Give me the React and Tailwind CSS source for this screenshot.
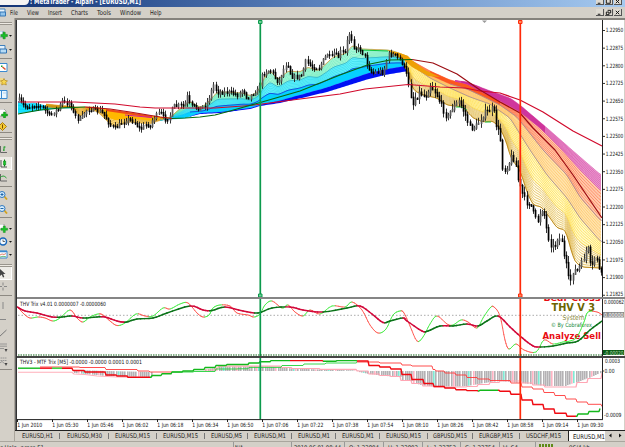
import React from "react";

const SANS = "font-['DejaVu_Sans_Condensed','DejaVu_Sans',sans-serif]";

// ---------- numeric helpers ----------
const parse = (s) => s.trim().split(/\s+/).map((p) => p.split(",").map(Number));
const at = (pts, x) => {
  if (x <= pts[0][0]) return pts[0][1];
  for (let i = 1; i < pts.length; i++) {
    if (x <= pts[i][0]) {
      const [x0, y0] = pts[i - 1];
      const [x1, y1] = pts[i];
      return x1 === x0 ? y1 : y0 + ((y1 - y0) * (x - x0)) / (x1 - x0);
    }
  }
  return pts[pts.length - 1][1];
};
let seed = 7;
const rnd = () => {
  seed = (seed * 16807) % 2147483647;
  return seed / 2147483647;
};
const smoothAt = (pts, x) => (at(pts, x - 2.5) + 2 * at(pts, x) + at(pts, x + 2.5)) / 4;
const curve = (a, b, t, x0, x1) => {
  let d = "";
  for (let x = x0; x <= x1; x += 2) {
    const y = smoothAt(a, x) * (1 - t) + smoothAt(b, x) * t;
    d += (d ? "L" : "M") + x + " " + y.toFixed(1);
  }
  return d;
};
const area = (a, b, x0, x1) => {
  const top = [];
  const bot = [];
  for (let x = x0; x <= x1; x += 2) {
    top.push(x + " " + smoothAt(a, x).toFixed(1));
    bot.unshift(x + " " + smoothAt(b, x).toFixed(1));
  }
  return "M" + top.concat(bot).join("L") + "Z";
};
const mix = (a, b, t) => {
  const xs = [...new Set([...a, ...b].map((p) => p[0]))].sort((p, q) => p - q);
  return xs.map((x) => [x, at(a, x) * (1 - t) + at(b, x) * t]);
};

function Band({ a, b, x0, x1, n = 0, line, fill, fo = 1, w = 0.6 }) {
  return (
    <g fill="none">
      <path d={area(a, b, x0, x1)} fill={fill} fillOpacity={fo} />
      {Array.from({ length: n }, (_, i) => (
        <path key={i} d={curve(a, b, n > 1 ? i / (n - 1) : 0, x0, x1)} stroke={line} strokeWidth={w} />
      ))}
    </g>
  );
}
const Line = ({ p, c, w = 1 }) => <polyline points={p} fill="none" stroke={c} strokeWidth={w} strokeLinejoin="round" />;
const T = ({ x, y, s, len, c = "#111", b, children }) => (
  <text x={x} y={y} fontSize={s} textLength={len} lengthAdjust="spacingAndGlyphs" fill={c} fontWeight={b ? 700 : 400}>
    {children}
  </text>
);

// ---------- price ----------
const price = parse(
  "18,99 20,101 24,106 28,107 35,105 42,107 47,112 50,116 53,112 58,109 62,101 66,103 70,102 73,112 78,119 81,119 85,111 90,109 100,111 105,116 110,125 115,128 120,124 127,119 133,121 140,129 146,124 150,126 153,118 160,112 165,119 169,117 173,106 180,105 184,106 187,96 190,105 195,107 200,108 206,104 210,95 213,84 217,92 230,92 238,95 243,89 247,98 252,94 258,90 262,74 265,72 271,70 276,80 279,81 283,70 287,62 291,76 298,77 302,74 305,61 308,63 312,67 318,68 323,60 328,53 330,58 334,53 338,57 341,50 344,54 346,50 348,32 351,37 354,48 360,49 365,57 367,65 372,73 380,71 383,73 388,54 395,55 401,61 405,70 409,85 412,105 415,98 420,92 425,97 430,85 436,93 442,107 447,118 451,109 459,101 465,114 470,128 476,126 484,113 493,108 496,125 500,135 501,150 503,172 508,165 512,155 515,162 518,180 521,190 526,202 530,203 534,215 537,222 540,212 543,208 547,232 550,243 554,248 557,238 562,240 564,258 567,268 569,284 573,270 577,270 582,262 587,247 589,251 591,275 593,260 596,255 599,270 601,274"
);
const candles = (() => {
  const out = [];
  let prev = price[0][1];
  for (let x = 18.5; x < 602; x += 2.19) {
    const k = x > 405 ? 1.5 : 1;
    const m = at(price, x) + (rnd() - 0.5) * 3.5 * k;
    const hi = Math.min(prev, m) - 0.5 - rnd() * 4 * k;
    const lo = Math.max(prev, m) + 0.5 + rnd() * 4 * k;
    out.push({ x: Math.round(x), o: Math.min(prev, m) - 0.3, c: Math.max(prev, m) + 1.2, hi, lo, up: m < prev - 1 });
    prev = m;
  }
  return out;
})();

// ---------- moving-average ribbons ----------
const lA = parse("18,101 25,104 34,103 46,106 60,107 74,107");
const lB = parse("18,113 35,111 50,109 62,108 74,108");
const oA = parse("46,104 74,107 95,107 110,110 130,113 150,116 170,118");
const oB = parse("46,107 60,108 70,106 75,110 80,118 85,112 90,109 98,112 104,118 110,124 116,127 122,124 130,122 140,123 150,124 158,121 170,118");
const gA = parse("160,120 170,118 176,112 184,106 190,101 195,105 200,107 203,107 212,98 217,92 223,92 243,93 250,96 258,92 263,80 270,70 278,80 288,71 300,72 308,67 318,71 327,63 333,57 347,53 352,45 360,49 387,50 393,51 409,57");
const gE = parse("160,120 172,119 185,118 200,113 220,112 250,108 260,105 280,100.5 327,87.5 367,73.5 387,69 409,65.5");
const gF = parse("160,120 172,119 185,118 200,114 220,113 250,109 260,106 280,103 327,92 367,79.5 387,74.5 409,71");
const g1 = mix(gA, gE, 0.36);
const g2 = mix(gA, gE, 0.7);

const L0 = parse("405,66 409,75 413,90 423,95 437,98 447,105 463,107 473,118 483,122 493,121 500,128 507,143 510,157 520,170 527,192 533,205 542,207 548,215 557,228 566,230 570,247 575,262 582,267 601,268");
const L1 = parse("405,60 410,64 430,78 450,88 470,97 490,104 510,118 530,150 547,175 567,198 580,218 601,242");
const L2 = parse("405,58 410,62 430,75 450,84 467,89 480,95 500,105 517,117 543,150 567,175 580,197 601,221");
const M = parse("405,57 430,71 450,80 467,84 480,91 500,101 520,112 540,128 562,150 580,170 601,191");
const L4 = parse("405,56 430,71 450,80 467,82 480,87 493,92 510,98 520,105 547,128 572,150 587,163 601,175");
const L05 = mix(L1, L0, 0.5);

const crimson = "18,102 75,102 115,104 140,107 155,108 215,108 250,105.5 262,104 300,99 340,94 365,89 408,84.5 440,87 465,88 480,91 500,93 520,100 543,112 573,131 602,146";
const signal = [
  ["#066a0b", "18,114 40,110 60,108 85,107"],
  ["#b00c14", "85,107 110,109 130,112 160,117 172,118.5"],
  ["#066a0b", "172,118.5 185,118 200,117 215,115 230,111 262,102 300,91 340,75 370,64 390,60 412,59.5"],
  ["#9b0c12", "412,59.5 433,63 457,74 480,90 500,102 520,113 533,128 555,150 573,175 602,218"],
];

const priceLabels = ["1.22950", "1.22875", "1.22800", "1.22725", "1.22650", "1.22575", "1.22500", "1.22425", "1.22350", "1.22275", "1.22200", "1.22125", "1.22050", "1.21975", "1.21900", "1.21825"];

function PricePane() {
  return (
    <svg className="block h-[277px] w-[608px] shrink-0" viewBox="17 20 608 277">
      <Band a={lA} b={lB} x0={18} x1={74} n={4} line="#00c4ee" fill="#12e3ff" />
      <Band a={oA} b={oB} x0={46} x1={170} n={10} line="#d08a00" fill="#ffcb30" fo={0.5} w={0.5} />
      <Band a={oA} b={mix(oA, oB, 0.6)} x0={104} x1={160} fill="#ffb800" />
      <Line p="106,110 130,113.5 152,117" c="#f04b16" w={2.2} />
      <Line p="125,115 152,117.5" c="#d31f9a" w={1} />
      <Band a={gA} b={g1} x0={160} x1={409} n={8} line="#4fe3ae" fill="#bdfbe0" w={0.5} />
      <Band a={g1} b={g2} x0={160} x1={409} n={7} line="#1fcfe2" fill="#6df5ff" w={0.5} />
      <Band a={g2} b={gE} x0={160} x1={409} n={2} line="#00b4ff" fill="#06d0ff" />
      <Band a={gE} b={gF} x0={190} x1={407} fill="#0010f4" />
      <path d={curve(gA, gA, 0, 160, 409)} fill="none" stroke="#e49a3d" strokeWidth="0.8" />
      <path d={curve(g1, g1, 0, 200, 405)} fill="none" stroke="#2b9bb0" strokeWidth="0.5" />
      <path d={curve(g2, g2, 0, 190, 405)} fill="none" stroke="#1439d3" strokeWidth="0.8" />
      <Line p="360,50 375,50.5 388,51" c="#10c743" w={1.2} />

      <Band a={L05} b={L0} x0={405} x1={602} n={10} line="#d9aa30" fill="#fff8cf" fo={0.4} w={0.6} />
      <Band a={L1} b={L05} x0={405} x1={602} n={9} line="#ffd83a" fill="#fff6a8" fo={0.6} w={0.65} />
      <Band a={L2} b={L1} x0={405} x1={602} n={8} line="#ffb347" fill="#ffdb92" fo={0.75} w={0.5} />
      <Band a={M} b={L2} x0={409} x1={602} n={10} line="#ff7347" fill="#ffbd98" fo={0.8} w={0.65} />
      <Band a={M} b={L2} x0={430} x1={500} fill="#fb4a0c" fo={0.75} />
      <Band a={L4} b={M} x0={455} x1={602} n={9} line="#d23f9e" fill="#ea9bd0" w={0.5} />
      <Band a={L4} b={M} x0={461} x1={545} fill="#c4108a" fo={0.6} />
      <path d={curve(L1, L1, 0, 408, 602)} fill="none" stroke="#a08b98" strokeWidth="0.8" />
      <path d={curve(L2, L2, 0, 450, 602)} fill="none" stroke="#a08b98" strokeWidth="0.8" />
      <path d={curve(L0, L0, 0, 409, 602)} fill="none" stroke="#b98516" strokeWidth="0.9" />
      <path d="M387 50L400 53L408 56L413 61L425 70L440 77L428 76L412 67L404 60L393 54Z" fill="#eea006" />
      <Line p="456,107 462,107 467,110" c="#1ac24b" w={1} />
      <Line p="485,122 491,122" c="#1ac24b" w={1} />

      {candles.map((k, i) => (
        <g key={i}>
          <line x1={k.x + 0.5} x2={k.x + 0.5} y1={k.hi} y2={k.lo} stroke="#1c1c1c" strokeWidth="0.9" />
          <rect x={k.x - 0.3} y={k.o} width="1.7" height={k.c - k.o} fill={k.up ? "#5a5a5a" : "#000"} />
        </g>
      ))}
      <Line p={crimson} c="#d10a2c" w={1.2} />
      {signal.map(([c, p]) => (
        <Line key={p} p={p} c={c} w={1.2} />
      ))}
      <path d="M482 20.5h5l-2.5 2.5z" fill="#999" />
      <path d="M260.3 20V297" stroke="#0c9a4c" strokeWidth="1.7" />
      <path d="M258.5 20.5h3.5v3h-3.5zM258.500 294h3.5v3h-3.5z" fill="#6fcf97" stroke="#0c9a4c" />
      <path d="M520.3 20V297" stroke="#ff2a0a" strokeWidth="1.7" />
      <path d="M518.5 20.5h3.5v3h-3.5zM518.500 294h3.5v3h-3.5z" fill="#ff8a5c" stroke="#ff2a0a" />
      <rect x="603" y="20" width="21" height="277" fill="#fff" />
      <path d="M602.5 20V297" stroke="#222" />
      {priceLabels.map((l, i) => (
        <g key={l}>
          <path d={`M603 ${30.5 + i * 17.65}h2`} stroke="#333" />
          <T x={605.7} y={(i === 15 ? 31.5 : 32.3) + i * 17.65} s={5.8} len={17.6}>
            {l}
          </T>
        </g>
      ))}
      <rect x="624" y="20" width="1" height="277" fill="#d4d0c8" />
    </svg>
  );
}

// Splits a line into rising (green) and falling (red) segments.
function Slope({ pts, up, down, w }) {
  return pts.slice(1).map(([x, y], i) => {
    const [px, py] = pts[i];
    return <line key={i} x1={px} y1={py} x2={x} y2={y} stroke={y > py ? down : up} strokeWidth={w} strokeLinecap="round" />;
  });
}

// Catmull-Rom resampling that rounds the oscillator corners.
const soften = (p) => {
  const out = [p[0]];
  for (let i = 0; i < p.length - 1; i++) {
    const a = p[Math.max(0, i - 1)];
    const b = p[i];
    const c = p[i + 1];
    const d = p[Math.min(p.length - 1, i + 2)];
    for (let s = 1; s <= 4; s++) {
      const t = s / 4;
      const f = (k) =>
        0.5 * (2 * b[k] + (c[k] - a[k]) * t + (2 * a[k] - 5 * b[k] + 4 * c[k] - d[k]) * t * t + (3 * b[k] - a[k] - 3 * c[k] + d[k]) * t * t * t);
      out.push([f(0), f(1)]);
    }
  }
  return out;
};

const trixSlow = soften(parse("17.5,307 25,311 37,313 52,317 62,317 72,316 83,318 97,317 105,317 117,321 123,322 127,322 137,319 153,318 167,313 190,306 203,310 212,310.5 225,307 243,311 258,313 272,308 290,307 303,310 323,312 347,308 360,306 372,314 383,322.5 390,321 403,318 407,321 422,331 428,331 440,326 453,326 467,324 478,326 487,321 498,316 510,327 520,336 530,344 537,347 553,346 567,343 578,341 590,330 602,321"));
const trixFast = soften(parse("17.5,307 24,314 30,318 38,317 45,318 53,321 60,318 70,310 77,318 83,322 90,317 98,314 103,315 110,321 117,325.5 125,323 136,314 145,316 153,316 163,308 170,309 180,304 188,303 197,313 203,317 209,315 213,308 220,305 230,306 237,313 248,315 254,317 260,314 265,305 272,301 282,308 288,305 295,312 303,316 310,310 320,314 332,306 345,307 352,302 362,310 370,325 378,333 386,329 393,315 400,311 404,313 410,326 417,341 423,337 430,324 437,316 447,324 453,325 461,320 468,322 477,328 483,318 490,308 494,307 500,316 505,340 509,349 516,344 524,350 536,352 544,340 553,344 563,342 570,341 577,337 584,322 588,312 597,312 602,315"));

function TrixPane() {
  return (
    <svg className="block h-[57px] w-[608px] shrink-0" viewBox="17 299 608 57">
      <path d="M18 315.3H602" stroke="#aaa" strokeDasharray="1.5 2" />
      <T x={543.5} y={300.9} s={9.5} len={57} c="#e80c12" b>Bear Cross</T>
      <T x={551.5} y={311} s={10.8} len={43.5} c="#6b6400" b>THV V 3</T>
      <T x={562.5} y={319.8} s={7} len={22} c="#8b8b3c">System</T>
      <T x={551} y={326.6} s={5.8} len={41} c="#16893a">© By Cobraforex</T>
      <T x={542.5} y={339.3} s={9.5} len={58.5} c="#e80c12" b>Analyze Sell</T>
      <Slope pts={trixFast} up="#40ec40" down="#ff5048" w={0.9} />
      <Slope pts={trixSlow} up="#0a7318" down="#d2083a" w={1.5} />
      <path d="M260.3 299V356" stroke="#0c9a4c" strokeWidth="1.7" />
      <path d="M520.3 299V356" stroke="#ff2a0a" strokeWidth="1.7" />
      <path d="M18 355H602" stroke="#126618" strokeDasharray="1.5 1" />
      <rect x="603" y="299" width="21" height="57" fill="#fff" />
      <path d="M602.5 299V356" stroke="#222" />
      <T x={20} y={305.5} s={5.8} len={86}>THV Trix v4.01 0.0000007 -0.0000060</T>
      <T x={604} y={304} s={5.8} len={20}>0.000062</T>
      <rect x="603" y="312" width="21" height="5.500" fill="#8b8b8b" />
      <T x={604} y={316.8} s={5.6} len={19.5} c="#fff">0.00000</T>
      <rect x="603" y="350" width="21" height="5" fill="#0a5a14" />
      <T x={604} y={354.5} s={5.6} len={19.5} c="#b6dfb6">-0.00020</T>
      <rect x="624" y="299" width="1" height="57" fill="#d4d0c8" />
    </svg>
  );
}

const hist = parse("204,369.5 216,368 218,366.5 268,366.5 280,367.5 292,368.5 320,369.5 357,370.5 358,372 369,374 380,375.5 391,376.5 401,377 402,380 411,380.5 412,383 423,385.5 433,386.5 460,386.5 467,386 478,384 490,382 500,381 510,382 522,383 533,384.5 545,386 565,386 567,385 577,382 588,378 600,373");
const stair = (s) => {
  const p = parse(s);
  return p.map(([x, y], i) => (i ? `${x - 1},${p[i - 1][1]} ${x},${y}` : `${x},${y}`)).join(" ");
};
const mtf = [
  ["#14b81c", "18,368.2 40,368.2"],
  ["#f00a12", "40,368.2 52,368.2"],
  ["#24d32c", "52,368.2 62,368.2"],
  ["#f00a12", "62,368.2 73,370.5 85,372 106,375 117,376 128,377.3 150,377.3"],
  ["#14b81c", "150,377.3 152,375.5 162,373.8 172,372 183,371 194,369.5 205,367.5 216,365.5 227,364.5 249,363 260,361.8 271,360.6 290,360.6"],
  ["#f00a12", "290,360.6 323,361.2"],
  ["#14b81c", "323,361.2 337,360.6 357,361"],
  ["#f00a12", "357,361 369,365.5 380,367 391,369 402,374.5 412,379.5 424,383.5 434,386.5 445,388 456,389.7 467,390.6 478,391"],
  ["#14b81c", "478,391 480,390.3 498,390.3"],
  ["#f00a12", "498,390.3 500,391.3 511,394.3 522,400 533,404.5 544,409 555,413.3 567,416.3 576,416.3"],
  ["#14b81c", "576,416.3 578,414 589,411.5 600,408.5"],
];
const mtfThin = [
  ["#ff3a3a", "40,367 80,367.5 106,369.5 138,371 150,372 172,372"],
  ["#22d23a", "172,372 194,371.5 216,369 238,368.8 249,367.4 282,365.5 304,364 326,363 357,362.3"],
  ["#ff3a3a", "357,362 380,363 402,365 412,366 433,369.5 436,371 445,373 456,375 467,377.5 478,379 490,380.5 500,380.5 511,383 522,387 533,389 544,392.5 555,395.5 566,399 577,402 588,404.3 602,406.5"],
];
const barTop = parse("74,370 106,371 152,372");
const barBottom = parse("74,373 106,376 150,377");

function MtfPane() {
  const bars = [];
  let n = 0;
  for (let x = 74; x < 602; x += 2.19) {
    n++;
    if (x > 152 && x < 204) continue;
    const early = x <= 152;
    const y0 = early ? at(barTop, x) : 371;
    const y1 = early ? at(barBottom, x) : at(hist, x);
    const c = n % 16 === 5 ? "#7eebd5" : n % 9 === 3 ? "#ffb4c4" : "#b4b1b4";
    bars.push(<rect key={n} x={Math.round(x)} y={Math.min(y0, y1)} width="1.6" height={Math.abs(y1 - y0)} fill={c} />);
  }
  return (
    <svg className="block h-[61px] w-[608px] shrink-0" viewBox="17 358 608 61">
      {bars}
      <Line p="18,372.3 72,372.3 74,374 85,374.5 97,376 117,377 138,377.5" c="#ffb0ba" w={1.1} />
      <Line p={stair("204,370 216,368 219,366.2 270,366.2 281,367.5 292,368.5 320,369.3 357,371 369,374 380,375.5 391,376.5 401,380.5 412,383.5 423,386 434,387 467,386.5 478,384.5 490,382.5 500,381 522,383 533,385 545,387 565,387 577,382.5 588,378.5 602,373")} c="#ffa6b4" w={1.2} />
      {mtfThin.map(([c, p]) => (
        <Line key={p} p={stair(p)} c={c} w={0.9} />
      ))}
      {mtf.map(([c, p]) => (
        <Line key={p} p={stair(p)} c={c} w={1.4} />
      ))}
      <path d="M260.3 358V419" stroke="#0c9a4c" strokeWidth="1.7" />
      <path d="M520.3 358V419" stroke="#ff2a0a" strokeWidth="1.7" />
      <rect x="603" y="358" width="21" height="61" fill="#fff" />
      <path d="M602.5 358V419" stroke="#222" />
      <T x={20} y={364} s={5.8} len={122}>THV3 - MTF Trix [M5] -0.0000 -0.0000 0.0001 0.0001</T>
      <T x={605} y={363} s={5.8} len={15}>0.0003</T>
      <T x={604.5} y={373} s={5.8} len={10}>0.00</T>
      <path d="M602 371h2" stroke="#333" />
      <T x={604} y={417.4} s={5.8} len={17.5}>-0.0009</T>
      <rect x="624" y="358" width="1" height="61" fill="#d4d0c8" />
    </svg>
  );
}

const times = ["1 Jun 2010", "1 Jun 05:30", "1 Jun 05:46", "1 Jun 06:02", "1 Jun 06:18", "1 Jun 06:34", "1 Jun 06:50", "1 Jun 07:06", "1 Jun 07:22", "1 Jun 07:38", "1 Jun 07:54", "1 Jun 08:10", "1 Jun 08:26", "1 Jun 08:42", "1 Jun 08:58", "1 Jun 09:14", "1 Jun 09:30"];

function TimeAxis() {
  return (
    <svg className="block h-[11px] w-[608px] shrink-0" viewBox="17 419 608 11">
      <path d="M17 419.6H603" stroke="#222" />
      {times.map((t, i) => (
        <g key={t}>
          <path d={`M${17.5 + i * 35} 419v3`} stroke="#222" />
          <T x={17.3 + i * 35} y={426.6} s={5.8} len={i ? 26 : 25}>
            {t}
          </T>
        </g>
      ))}
      <rect x="624" y="419" width="1" height="11" fill="#d4d0c8" />
    </svg>
  );
}

// ---------- window chrome ----------
const winGlyph = {
  min: <path d="M2 5.500h3" />,
  max: <path d="M1.500 1h4.500v4.500h-4.500z" />,
  restore: <path d="M3 1h3.500v3h-1.500M1.500 3h3v3h-3z" />,
  close: <path d="M2 1.500l4 4M6 1.500l-4 4" />,
};
const WinButton = ({ kind }) => (
  <span className="flex h-[7px] w-2 items-center justify-center border-r border-b border-[#555] bg-[#dedad2]">
    <svg className="h-[7px] w-2" viewBox="0 0 8 7" fill="none" stroke="#111" strokeWidth="1.1">
      {winGlyph[kind]}
    </svg>
  </span>
);

const drop = <path d="M9 4h3l-1.500 1.700z" fill="#111" />;
const icons = {
  add: <>
    <path d="M-1 0h4v6h-4z" fill="#eef6ff" stroke="#5a87b5" strokeWidth=".6" />
    <path d="M3 1.200h2.200v2.200h2.200v2.200H5.200v2.200H3V5.600H.8V3.400H3z" fill="#18c028" stroke="#087a10" strokeWidth=".5" />
    {drop}
  </>,
  windows: <>
    <path d="M-1 .5h6v5h-6z" fill="#e5f2fc" stroke="#3f80bd" />
    <path d="M0 4h6.500v4H0z" fill="#b6dbf5" stroke="#2f72b3" />
    {drop}
  </>,
  market: <>
    <path d="M-1 .5h8v8h-8z" fill="#fff" stroke="#3a8ad0" />
    <path d="M1 2.500h1.500v1.500H1z" fill="#1aa02a" />
    <path d="M2.500 4l3 2.500" stroke="#dd5028" strokeWidth="1.500" />
  </>,
  star: <>
    <path d="M-1 1h4l1 2v4h-5z" fill="#f0d889" />
    <path d="M4 1.500l1 2 2.500.3-1.700 1.700.5 2.500L4 7 1.700 8l.5-2.500L.5 3.800 3 3.500z" fill="#f7d750" stroke="#a87c14" strokeWidth=".6" />
  </>,
  panel: <>
    <path d="M-1 .5h8v8h-8z" fill="#eaf6ff" stroke="#3a8ad0" />
    <path d="M1.500 1v7" stroke="#3a8ad0" />
    <path d="M3 3h3" stroke="#89b8dd" strokeWidth=".6" />
  </>,
  order: <>
    <path d="M-1 0h5l2 2v5h-7z" fill="#fff" stroke="#777" strokeWidth=".6" />
    <path d="M3.500 3h2v2h2v2h-2v2h-2V7h-2V5h2z" fill="#18b820" stroke="#087a10" strokeWidth=".4" />
  </>,
  warn: <>
    <path d="M2.500 .5L6.500 4.500L2.500 8.500L-1.500 4.500z" fill="#f6cc36" stroke="#ad7d0d" />
    <path d="M2.500 2.500v4" stroke="#7a4d00" />
  </>,
  bars: <>
    <path d="M.5 1v6.500h6.500" stroke="#666" fill="none" />
    <path d="M4 1.500v4.500M4 2h1.500M3 5h1" stroke="#159a20" fill="none" />
  </>,
  candle: <>
    <path d="M1 1v7h6" stroke="#555" fill="none" />
    <path d="M4.500 .5v7" stroke="#0b7d15" />
    <path d="M3.500 2h2.200v4H3.500z" fill="#18c628" stroke="#0b7d15" strokeWidth=".5" />
  </>,
  line: <>
    <path d="M.5 1v7h6.500" stroke="#666" fill="none" />
    <path d="M0 5Q3 1 6.500 5" stroke="#24a233" fill="none" />
  </>,
  zin: <>
    <path d="M4 5l3 3.500" stroke="#d3a31d" strokeWidth="1.800" />
    <circle cx="2" cy="3.500" r="3" fill="#d7efff" stroke="#3178be" />
    <path d="M.5 3.500h3M2 2v3" stroke="#1f66aa" />
  </>,
  zout: <>
    <path d="M4 5l3 3.500" stroke="#d3a31d" strokeWidth="1.800" />
    <circle cx="2" cy="3.500" r="3" fill="#d7efff" stroke="#3178be" />
    <path d="M.5 3.500h3" stroke="#1f66aa" />
  </>,
  indic: <>
    <path d="M-1 0h5v5h-5z" fill="#fff" stroke="#777" strokeWidth=".6" />
    <path d="M3.300 2h2v2.200h2.200v2H5.300v2.300h-2V6.200H1v-2h2.300z" fill="#18c628" stroke="#087a10" strokeWidth=".4" />
    {drop}
  </>,
  clock: <>
    <circle cx="3" cy="4.500" r="3.500" fill="#f4faff" stroke="#1866ba" strokeWidth="1.500" />
    <path d="M3 2.500v2h2" stroke="#333" strokeWidth=".7" fill="none" />
    {drop}
  </>,
  tmpl: <>
    <path d="M-1 1h8v7h-8z" fill="#fff" stroke="#3a8ad0" />
    <path d="M-1 1.500h8" stroke="#3a8ad0" strokeWidth="1.500" />
    <path d="M0 5l2-1 2 .5 2-1" stroke="#d2513a" strokeWidth=".7" fill="none" />
    <path d="M0 7l3-.7 3 .5" stroke="#2fa142" strokeWidth=".7" fill="none" />
    {drop}
  </>,
  cursor: <path d="M0 0v7l1.700-1.500L3 8.500l1.300-.6L3.200 5h2.300z" fill="#444" />,
  cross: <path d="M3 .5v3M3 5.500v3M-.5 4.500h2.500M4 4.500h3" stroke="#888" />,
  vline: <path d="M3 1v7" stroke="#888" />,
  hline: <path d="M-1 4.500h7" stroke="#888" />,
  trend: <path d="M-1 8L6.500 1" stroke="#777" />,
  chan: <>
    <path d="M-1 1h8M-1 3.200h8M-1 5.500h5" stroke="#888" strokeWidth=".8" />
    <path d="M4.500 6h3L6 9z" fill="#444" />
  </>,
  fib: <>
    <path d="M-1 1h8M-1 3.500h8" stroke="#888" strokeWidth=".8" strokeDasharray="1.500 .5" />
    <path d="M-1 6.500L2 4.500L4.500 6.500" stroke="#888" strokeWidth=".8" fill="none" />
    <path d="M4.500 6h3L6 9z" fill="#444" />
  </>,
};
const rows = [
  ["hr2", 9], ["add", 14], ["windows", 14], ["hr", 4], ["market", 14], ["star", 14], ["panel", 12], ["hr", 5], ["order", 16], ["warn", 10],
  ["hr", 3], ["hr2", 8], ["bars", 15], ["candle", 13, true], ["line", 15], ["hr", 2], ["zin", 16], ["zout", 12], ["hr", 5], ["indic", 16],
  ["clock", 10], ["tmpl", 17], ["hr2", 4], ["cursor", 13, true], ["cross", 13], ["hr", 4], ["vline", 16], ["hline", 13], ["trend", 14], ["chan", 14], ["fib", 14], ["hr", 2],
];

const Toolbar = () => (
  <div className="flex w-[15px] shrink-0 flex-col overflow-hidden border-r border-[#aaa59c] bg-[#d4d0c8] pt-px">
    {rows.map(([k, h, on], i) => (
      <div key={i} className={"flex w-[12px] shrink-0 items-center overflow-hidden " + (on ? "border-r border-b border-white bg-[#eeece7]" : "")} style={{ height: h }}>
        {k === "hr" && <span className="h-px w-full bg-[#8d8982]" />}
        {k === "hr2" && <span className="h-[3px] w-full border-t border-b border-[#99958d] bg-[#eeeae3]" />}
        {icons[k] && (
          <svg className="h-[9px] w-[12px] shrink-0" viewBox="0 0 12 9">
            {icons[k]}
          </svg>
        )}
      </div>
    ))}
  </div>
);

function Label({ text, w, size = 6.8, color = "#222", bold }) {
  return (
    <svg className="block h-[10px] shrink-0 overflow-visible" style={{ width: w }} viewBox={`0 0 ${w} 10`}>
      <T x={0} y={7.5} s={size} len={w} c={color} b={bold}>
        {text}
      </T>
    </svg>
  );
}

const tabs = [
  ["EURUSD,H1", 45, 31], ["EURUSD,M30", 49, 35], ["EURUSD,M15", 48, 35], ["EURUSD,M15", 48, 35], ["EURUSD,M5", 43, 31], ["EURUSD,M1", 44, 32],
  ["EURUSD,M1", 44, 32], ["EURUSD,M1", 44, 32], ["EURUSD,M15", 48, 35], ["GBPUSD,M15", 45, 34], ["EURGBP,M15", 47, 34], ["USDCHF,M15", 47, 35],
];

const status = [
  ["For Help, press F1", 234, -6, 50], ["N/A", 58, 1, 8], ["2010.06.01 08:44", 53, 2, 47], ["O: 1.22804", 39, 4, 30], ["H: 1.22803", 39, 4, 30],
  ["L: 1.22753", 38, 4, 29], ["C: 1.22754", 39, 4, 30], ["V: 64", 36, 3, 15],
];

export default function App() {
  return (
    <div className={"flex h-[447px] w-[625px] flex-col overflow-hidden bg-[#d4d0c8] " + SANS}>
      <div className="flex h-[7px] shrink-0 items-start justify-between overflow-hidden bg-linear-to-r from-[#123375] via-[#5a80bb] to-[#a6caf0]">
        <div className="-mt-[4px] flex items-start">
          <span className="h-[9px] w-[29px] rounded-r-full bg-[#f5f4f3]" />
          <span className="ml-px">
            <Label text=": MetaTrader - Alpari - [EURUSD,M1]" w={111} size={7.8} color="#fff" bold />
          </span>
        </div>
        <div className="-mt-[2px] flex gap-px pr-[3px]">
          <WinButton kind="min" />
          <WinButton kind="max" />
          <WinButton kind="close" />
        </div>
      </div>
      <div className="flex h-[11px] shrink-0 items-center justify-between">
        <div className="flex items-center">
          <svg className="h-[9px] w-[10px]" viewBox="0 0 10 9">
            <path d="M-1 1h6v5h-6z" fill="#e8f4ff" stroke="#4484bd" />
            <path d="M0 4h5.500v4H0z" fill="#8fc3ec" stroke="#3576b5" />
          </svg>
          <div className="-mt-[2px] flex items-center gap-[9px]">
            <Label text="File" w={8} />
            <Label text="View" w={12} />
            <Label text="Insert" w={14} />
            <Label text="Charts" w={17} />
            <Label text="Tools" w={14} />
            <Label text="Window" w={21} />
            <Label text="Help" w={11.5} />
          </div>
        </div>
        <div className="flex gap-px pr-[3px]">
          <WinButton kind="min" />
          <WinButton kind="restore" />
          <WinButton kind="close" />
        </div>
      </div>
      <div className="flex min-h-0 flex-1">
        <Toolbar />
        <div className="flex w-[610px] shrink-0 flex-col border-t-2 border-[#85827c]">
          <div className="flex h-[410px] shrink-0 border-l border-[#666]">
            <div className="flex w-[609px] shrink-0 flex-col border-l border-[#333] bg-white">
              <PricePane />
              <div className="h-[2px] shrink-0 bg-[#858585]" />
              <TrixPane />
              <div className="h-[2px] shrink-0 bg-[#444]" />
              <MtfPane />
              <TimeAxis />
            </div>
          </div>
          <div className="flex h-[11px] shrink-0 border-t border-[#222] bg-[#d4d0c8]">
            {tabs.map(([t, w, tw], i) => (
              <div key={i} className="flex items-center" style={{ width: w }}>
                <span className="-mt-[2px] flex flex-1 justify-center">
                  <Label text={t} w={tw} size={6.4} />
                </span>
                {i < 11 && <span className="h-[6px] w-px bg-[#777]" />}
              </div>
            ))}
            <div className="ml-px flex w-[37px] items-start overflow-hidden border-l border-[#222] bg-white pl-1">
              <Label text="EURUSD,M1" w={32} size={6.4} color="#111" />
            </div>
            <svg className="h-[10px] w-[19px]" viewBox="0 0 19 10">
              <path d="M6.500 2.500v4L4 4.500zM14 2.500v4L16.500 4.500z" fill="#111" />
            </svg>
          </div>
        </div>
      </div>
      <div className="flex h-[6px] shrink-0 overflow-hidden border-t border-[#aaa69e]">
        {status.map(([t, w, pl, tw], i) => (
          <div key={i} className="flex shrink-0 items-start overflow-hidden border-r border-[#999]" style={{ width: w }}>
            <span style={{ marginLeft: pl }}>
              <Label text={t} w={tw} size={6.5} />
            </span>
          </div>
        ))}
        <div className="flex gap-px pt-[2px] pl-[3px]">
          {[0, 1, 2, 3, 4].map((i) => (
            <span key={i} className="h-[6px] w-[2px] bg-[#5f8a18]" />
          ))}
        </div>
        <div className="ml-4">
          <Label text="96/4 kb" w={21} size={6.5} />
        </div>
      </div>
    </div>
  );
}
